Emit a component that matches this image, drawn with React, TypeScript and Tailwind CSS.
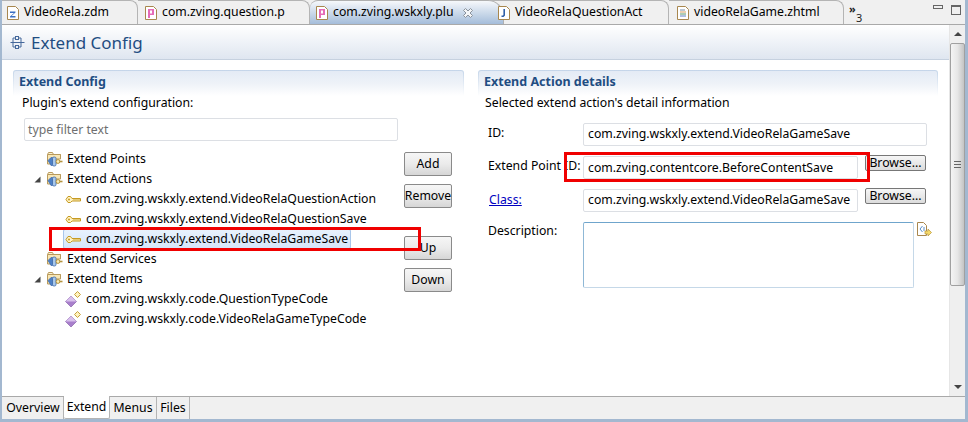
import React from "react";

const ZIcon = () => (
  <svg width="12" height="14" viewBox="0 0 12 14" className="shrink-0">
    <path d="M.5.5h8l3 3v10H.5z" fill="#fff" stroke="#a8874e" />
    <path d="M3 5.5h5.5v1L4.5 10h4v1.5H3v-1L7 7H3z" fill="#3b6fc4" />
  </svg>
);
const PIcon = () => (
  <svg width="12" height="14" viewBox="0 0 12 14" className="shrink-0">
    <path d="M.5.5h8l3 3v10H.5z" fill="#fff" stroke="#a8874e" />
    <path d="M3 3h6v6H5v3H3z M5 4.600V7.400h2V4.600z" fill="#e56bb8" fillRule="evenodd" />
  </svg>
);
const JIcon = () => (
  <svg width="12" height="14" viewBox="0 0 12 14" className="shrink-0">
    <path d="M.5.5h8l3 3v10H.5z" fill="#fff" stroke="#a8874e" />
    <path d="M7 3v6.500L5.500 11H3.500V9.600h1.400l.5-.5V3z" fill="#2f5fa8" />
  </svg>
);
const HtmlIcon = () => (
  <svg width="12" height="14" viewBox="0 0 12 14" className="shrink-0">
    <path d="M.5.5h8l3 3v10H.5z" fill="#fff" stroke="#a8874e" />
    <path d="M3 4h5" stroke="#7a8fa8" />
    <path d="M3 6h6" stroke="#d8a060" />
    <path d="M3 8h6" stroke="#5a9a6a" />
    <path d="M3 10h6" stroke="#6080c0" />
  </svg>
);
const FolderIcon = () => (
  <svg width="16" height="16" viewBox="0 0 16 16" className="shrink-0">
    <path d="M.5 3.500 1.500 1.500h4l1 2h7V7" fill="#fdf1cf" stroke="#b99a5c" />
    <path d="M.5 3.500h13V8H9v5H.5z" fill="#f8e6b4" stroke="#b99a5c" />
    <path d="M1 9.500 4 6.500h1.500v8H4z" fill="#4d80c6" stroke="#3d69a8" strokeWidth=".7" />
    <rect x="5.500" y="6" width="3.500" height="9" rx="1.400" fill="#a9c8ea" stroke="#3d69a8" strokeWidth=".8" />
    <circle cx="11" cy="10.500" r="1.900" fill="#fbeeb8" stroke="#b3933f" />
    <path d="M12.500 10.500h3" stroke="#b3933f" strokeWidth="1.600" />
  </svg>
);
const KeyIcon = () => (
  <svg width="16" height="9" viewBox="0 0 16 9" className="shrink-0">
    <path d="M1 4.500 3 1.500h2.500L7 3.500h8.500v2.500H7L5.500 7.500H3z" fill="#fff3c4" stroke="#c69a22" />
    <path d="M8 4.700h7" stroke="#c69a22" strokeWidth=".6" />
    <circle cx="4" cy="4.500" r="1" fill="#c69a22" />
  </svg>
);
const DiamondIcon = () => (
  <svg width="16" height="16" viewBox="0 0 16 16" className="shrink-0">
    <path d="M6 5 11.500 10.500 6 16 .5 10.500z" fill="#a87fcc" stroke="#8a63ab" strokeWidth=".7" />
    <path d="M6 5 11.500 10.500H.5z" fill="#d8c0ec" />
    <path d="M12.500 .5 15.500 3.500 12.500 6.500 9.500 3.500z" fill="#fff3c0" stroke="#c8a23c" />
  </svg>
);
const Chevron = () => (
  <svg width="9" height="9" viewBox="0 0 9 9" className="shrink-0">
    <path d="M7.500 1.500v6h-6z" fill="#444" />
  </svg>
);

const Tab = ({ icon, label, w, pl, active, close }: { icon: React.ReactNode; label: string; w: string; pl: string; active?: boolean; close?: boolean }) => (
  <div
    className={`${w} ${pl} h-[24px] flex items-center shrink-0 gap-[5px] border-r border-t ${
      active
        ? "bg-gradient-to-b from-[#f6f8fb] to-[#a4bdda] border-[#b0b0b0] rounded-tl-[8px] rounded-tr-[16px] -mr-[14px]"
        : "border-[#b4b4b4] rounded-tr-[8px]"
    }`}
  >
    {icon}
    <span className="whitespace-nowrap">{label}</span>
    {close && (
      <svg width="12" height="12" viewBox="0 0 12 12" className="ml-[3px] shrink-0">
        <path d="M1.500 3.500 3.500 1.500 6 4 8.500 1.500 10.500 3.500 8 6 10.500 8.500 8.500 10.500 6 8 3.500 10.500 1.500 8.500 4 6z" fill="#f4f6f8" stroke="#8a929c" />
      </svg>
    )}
  </div>
);

const TreeRow = ({ indent, chev, icon, label, w, selected }: { indent: string; chev?: boolean; icon: React.ReactNode; label: string; w: string; selected?: boolean }) => (
  <div className={`h-[20px] flex items-center ${indent}`}>
    {chev && <span className="w-[14px] flex"><Chevron /></span>}
    <span className={`${w} flex items-center shrink-0 relative z-10`}>{icon}</span>
    <span
      className={`whitespace-nowrap leading-[18px] ${
        selected ? "bg-gradient-to-b from-[#e8f2fd] to-[#d5e6fa] border border-[#a9c6ea] rounded-[2px] -ml-[23px] pl-[22px] pr-[2px]" : ""
      }`}
    >
      {label}
    </span>
  </div>
);

const Btn = ({ label, w, h, mb }: { label: string; w: string; h: string; mb: string }) => (
  <div
    className={`${w} ${h} ${mb} flex items-center justify-center shrink-0 border border-[#8a8a8a] rounded-[2px] bg-gradient-to-b from-[#f6f6f6] via-[#ebebeb] to-[#d6d6d6]`}
  >
    {label}
  </div>
);

const SectionHead = ({ title, w }: { title: string; w: string }) => (
  <div className={`${w} h-[26px] rounded-t-[3px] bg-gradient-to-b from-[#c4d5e9] to-white px-[1px] pt-[1px]`}>
    <div className="h-full rounded-t-[2px] bg-gradient-to-b from-[#e4ebf5] via-[#eef2f8] to-white pl-[5px] pt-[1px] text-[12.5px] leading-[20px] font-bold text-[#1f4d82]">
      {title}
    </div>
  </div>
);

const Input = ({ text, w, h, pt }: { text: string; w: string; h: string; pt?: string }) => (
  <div className={`${w} ${h} ${pt ?? ""} border border-[#dcdfe4] rounded-[2px] flex items-center pl-[4px] whitespace-nowrap overflow-hidden bg-white`}>
    {text}
  </div>
);

export default function App() {
  return (
    <div
      className="relative w-[968px] h-[422px] overflow-hidden bg-[#f0f0f0] text-black text-[12.25px] flex flex-col border-l-[2px] border-r-[3px] border-b-[3px] border-[#a3b8d0]"
      style={{ fontFamily: '"Noto Sans", "Open Sans", sans-serif' }}
    >
      {/* Editor tabs */}
      <div className="h-[25px] shrink-0 flex border-b border-[#a9a9a9] relative">
        <Tab icon={<ZIcon />} label="VideoRela.zdm" w="w-[136px]" pl="pl-[5px]" />
        <Tab icon={<PIcon />} label="com.zving.question.p" w="w-[172px]" pl="pl-[7px]" />
        <Tab icon={<PIcon />} label="com.zving.wskxly.plu" w="w-[194px]" pl="pl-[6px]" active close />
        <Tab icon={<JIcon />} label="VideoRelaQuestionAct" w="w-[179px]" pl="pl-[8px]" />
        <Tab icon={<HtmlIcon />} label="videoRelaGame.zhtml" w="w-[175px]" pl="pl-[8px]" />
        <div className="w-[30px] shrink-0 pl-[5px] text-[11px] leading-[12px] pt-[3px] text-[#222]">
          <div className="font-bold">»</div>
          <div className="pl-[7px] -mt-[3px]">3</div>
        </div>
        <div className="ml-auto shrink-0 flex items-start gap-[8px] pt-[5px] pr-[4px]">
          <div className="w-[10px] h-[4px] border border-[#666] shrink-0" />
          <div className="w-[10px] h-[10px] border border-[#666] border-t-2 shrink-0" />
        </div>
      </div>

      {/* Editor body */}
      <div className="flex flex-1 min-h-0 bg-white">
        <div className="flex-1 min-w-0 flex flex-col">
          <div className="h-[35px] shrink-0 flex items-center pl-[8px] gap-[6px] bg-gradient-to-b from-white to-[#dfe6f0] border-b border-[#c6d1df]">
            <svg width="15" height="15" viewBox="0 0 15 15" className="shrink-0">
              <g fill="none" stroke="#45689b">
                <rect x="5.500" y="1.500" width="3" height="3" />
                <rect x="5.500" y="10.500" width="3" height="3" />
                <path d="M.5 7.500h14M3 3h2.500M3 12h2.500M3 3v9M11 3H8.500M11 12H8.500M11 3v9" />
              </g>
            </svg>
            <span className="text-[17px] leading-none text-[#1f4d82]">Extend Config</span>
          </div>

          <div className="flex-1 min-h-0 flex pl-[11px] pt-[10px]">
            {/* Left section */}
            <div className="w-[465px] shrink-0">
              <SectionHead title="Extend Config" w="w-[451px]" />
              <div className="pl-[9px] -mt-[2px] leading-[18px]">Plugin's extend configuration:</div>
              <div className="ml-[11px] mt-[6px] w-[374px] h-[23px] border border-[#dcdfe4] rounded-[2px] pl-[3px] pt-[1px] flex items-center text-[#6f6f6f]">
                type filter text
              </div>
              <div className="flex mt-[8px]">
                <div className="w-[391px] shrink-0">
                  <TreeRow indent="pl-[34px]" w="w-[20px]" icon={<FolderIcon />} label="Extend Points" />
                  <TreeRow indent="pl-[20px]" w="w-[20px]" chev icon={<FolderIcon />} label="Extend Actions" />
                  <TreeRow indent="pl-[52px]" w="w-[21px]" icon={<KeyIcon />} label="com.zving.wskxly.extend.VideoRelaQuestionAction" />
                  <TreeRow indent="pl-[52px]" w="w-[21px]" icon={<KeyIcon />} label="com.zving.wskxly.extend.VideoRelaQuestionSave" />
                  <TreeRow indent="pl-[52px]" w="w-[21px]" icon={<KeyIcon />} label="com.zving.wskxly.extend.VideoRelaGameSave" selected />
                  <TreeRow indent="pl-[34px]" w="w-[20px]" icon={<FolderIcon />} label="Extend Services" />
                  <TreeRow indent="pl-[20px]" w="w-[20px]" chev icon={<FolderIcon />} label="Extend Items" />
                  <TreeRow indent="pl-[52px]" w="w-[21px]" icon={<DiamondIcon />} label="com.zving.wskxly.code.QuestionTypeCode" />
                  <TreeRow indent="pl-[52px]" w="w-[21px]" icon={<DiamondIcon />} label="com.zving.wskxly.code.VideoRelaGameTypeCode" />
                </div>
                <div className="flex flex-col pt-[3px]">
                  <Btn label="Add" w="w-[48px]" h="h-[24px]" mb="mb-[8px]" />
                  <Btn label="Remove" w="w-[48px]" h="h-[24px]" mb="mb-[28px]" />
                  <Btn label="Up" w="w-[48px]" h="h-[24px]" mb="mb-[8px]" />
                  <Btn label="Down" w="w-[48px]" h="h-[24px]" mb="mb-0" />
                </div>
              </div>
            </div>

            {/* Right section */}
            <div className="w-[460px] shrink-0">
              <SectionHead title="Extend Action details" w="w-[460px]" />
              <div className="pl-[7px] -mt-[2px] leading-[18px]">Selected extend action's detail information</div>
              <div className="flex mt-[11px]">
                <div className="w-[90px] pl-[10px] shrink-0 flex flex-col -mt-[6px]">
                  <div className="h-[33px] flex items-center">ID:</div>
                  <div className="h-[33px] flex items-center whitespace-nowrap">Extend Point ID:</div>
                  <div className="h-[34px] pl-[1px] flex items-center text-[#0000c0] underline">Class:</div>
                  <div className="h-[29px] flex items-center">Description:</div>
                </div>
                <div className="ml-[15px] flex flex-col">
                  <Input text="com.zving.wskxly.extend.VideoRelaGameSave" w="w-[344px]" h="h-[23px]" />
                  <div className="flex mt-[10px] gap-[7px]">
                    <Input text="com.zving.contentcore.BeforeContentSave" w="w-[275px]" h="h-[23px]" pt="pt-[2px]" />
                    <div className="w-[61px] h-[16px] -mt-[1px] border border-[#777] rounded-[2px] flex items-center justify-center bg-gradient-to-b from-[#f6f6f6] to-[#dcdcdc]">Browse...</div>
                  </div>
                  <div className="flex mt-[10px] gap-[7px]">
                    <Input text="com.zving.wskxly.extend.VideoRelaGameSave" w="w-[275px]" h="h-[23px]" />
                    <div className="w-[61px] h-[16px] -mt-[1px] border border-[#777] rounded-[2px] flex items-center justify-center bg-gradient-to-b from-[#f6f6f6] to-[#dcdcdc]">Browse...</div>
                  </div>
                  <div className="flex mt-[10px] gap-[3px]">
                    <div className="w-[331px] h-[66px] border border-[#c5d8e8] border-t-[#6fa5cc] border-l-[#8fb8d6] rounded-[2px]" />
                    <svg width="15" height="16" viewBox="0 0 15 16" className="shrink-0">
                      <path d="M.5.500h6l3 3v10H.5z" fill="#fff" stroke="#a8874e" />
                      <path d="M5.500 4 3 7l2.500 3M7 5v4" fill="none" stroke="#5a8fc8" />
                      <path d="M8 9h3V7l3.500 3.500L11 14v-2H8z" fill="#f5d96a" stroke="#b8973a" strokeWidth=".7" />
                    </svg>
                  </div>
                </div>
              </div>
            </div>
          </div>
        </div>

        {/* Scrollbar */}
        <div className="w-[16px] shrink-0 bg-[#efefef] flex flex-col border-l border-[#e6e6e6]">
          <div className="h-[18px] flex items-center justify-center">
            <div className="w-0 h-0 border-l-[4px] border-r-[4px] border-b-[4px] border-l-transparent border-r-transparent border-b-[#444]" />
          </div>
          <div className="h-[243px] border border-[#a0a0a0] rounded-[2px] bg-gradient-to-r from-[#f4f4f4] via-[#e6e6e6] to-[#c4c4c4] flex flex-col items-center justify-center gap-[2px]">
            <div className="w-[7px] h-[1px] bg-[#666]" />
            <div className="w-[7px] h-[1px] bg-[#666]" />
            <div className="w-[7px] h-[1px] bg-[#666]" />
          </div>
          <div className="mt-auto h-[18px] flex items-center justify-center">
            <div className="w-0 h-0 border-l-[4px] border-r-[4px] border-t-[4px] border-l-transparent border-r-transparent border-t-[#444]" />
          </div>
        </div>
      </div>

      {/* Bottom page tabs */}
      <div className="h-[23px] shrink-0 flex items-stretch border-t border-[#a9a9a9] pl-[1px]">
        <div className="w-[61px] flex items-center justify-center border-r border-[#b4b4b4]">Overview</div>
        <div className="w-[46px] -mt-[1px] flex items-center justify-center bg-white border-r border-b border-[#b4b4b4] rounded-b-[2px]">Extend</div>
        <div className="w-[47px] flex items-center justify-center border-r border-[#b4b4b4]">Menus</div>
        <div className="w-[33px] flex items-center justify-center border-r border-[#b4b4b4]">Files</div>
      </div>

      {/* Red annotation boxes */}
      <div className="absolute left-[47px] top-[227px] w-[372px] h-[24px] border-[3px] border-[#f00000] z-20" />
      <div className="absolute left-[562px] top-[152px] w-[306px] h-[30px] border-[3px] border-[#f00000] z-20" />
    </div>
  );
}
